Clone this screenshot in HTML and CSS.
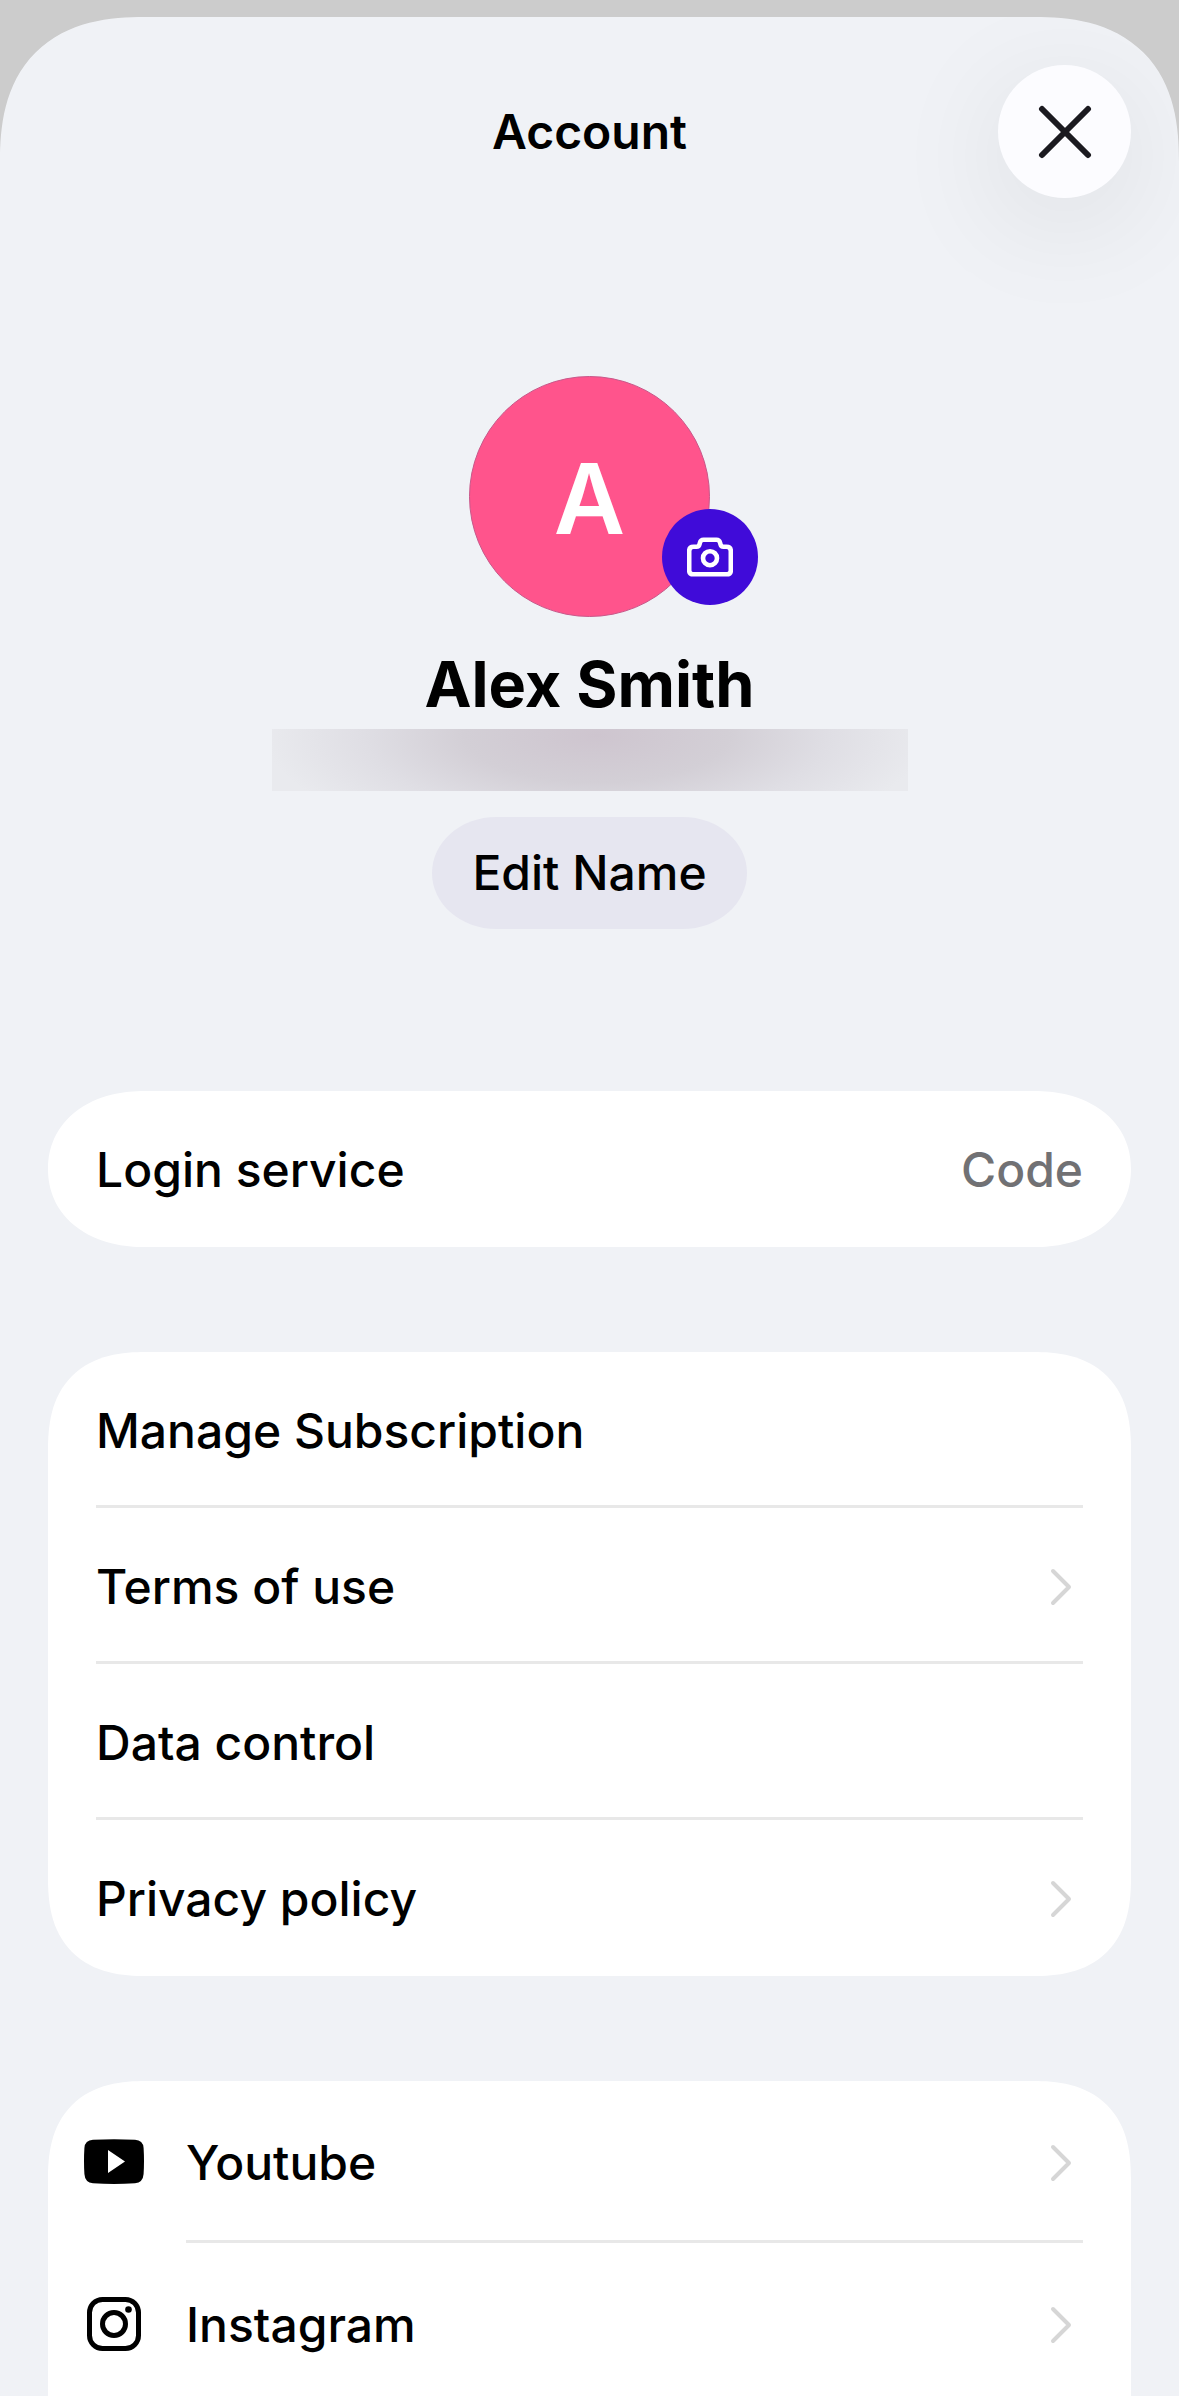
FILE: index.html
```html
<!DOCTYPE html>
<html lang="en">
<head>
    <meta charset="UTF-8">
    <meta name="viewport" content="width=device-width, initial-scale=1.0">
    <title>Account</title>
    <link rel="stylesheet" href="styles.css">
</head>
<body>

<main class="sheet">
    <header class="header">
        <h1 class="title">Account</h1>
        <button class="close-btn" type="button" aria-label="Close">
            <svg width="54" height="54" viewBox="0 0 54 54" fill="none" stroke="#1b1a20" stroke-width="6" stroke-linecap="round">
                <path d="M4 4L50 50M50 4L4 50"/>
            </svg>
        </button>
    </header>

    <section class="profile">
        <div class="avatar">
            <span>A</span>
            <button class="photo-btn" type="button" aria-label="Change photo">
                <svg width="46" height="40" viewBox="0 0 46 39" fill="none" stroke="#fff" stroke-width="4.6">
                    <path d="M6.5 9.2H9.5Q12 9.2 12.6 6.5L13 5Q13.7 2.2 16.5 2.2H29.5Q32.3 2.2 33 5L33.4 6.5Q34 9.2 36.5 9.2H39.5Q43.8 9.2 43.8 13.5V33Q43.8 36.8 39.5 36.8H6.5Q2.2 36.8 2.2 33V13.5Q2.2 9.2 6.5 9.2Z"/>
                    <circle cx="23" cy="20.7" r="7"/>
                </svg>
            </button>
        </div>
        <h2 class="name">Alex Smith</h2>
        <div class="hidden-email"></div>
        <button class="edit-btn" type="button">Edit Name</button>
    </section>

    <section class="card card-single">
        <div class="row">
            <span>Login service</span>
            <span class="value">Code</span>
        </div>
    </section>

    <nav class="card">
        <a class="row" href="#">Manage Subscription</a>
        <a class="row" href="#">Terms of use
            <svg class="chevron" width="22" height="38" viewBox="0 0 22 38"><path d="M3 3L19 19L3 35"/></svg>
        </a>
        <a class="row" href="#">Data control</a>
        <a class="row" href="#">Privacy policy
            <svg class="chevron" width="22" height="38" viewBox="0 0 22 38"><path d="M3 3L19 19L3 35"/></svg>
        </a>
    </nav>

    <nav class="card card-social">
        <a class="social" href="#">
            <svg class="social-icon" width="60" height="60" viewBox="0 0 60 60">
                <path fill="#000" fill-rule="evenodd" d="M9 7.8Q30 6.8 51 7.8Q59 8.2 59.6 16Q60.4 29 59.6 42Q59 50.6 51 51.2Q30 52.6 9 51.2Q1 50.6 .4 42Q-.4 29 .4 16Q1 8.2 9 7.8ZM24 18V41L41 29.5Z"/>
            </svg>
            <span class="row">Youtube
                <svg class="chevron" width="22" height="38" viewBox="0 0 22 38"><path d="M3 3L19 19L3 35"/></svg>
            </span>
        </a>
        <a class="social" href="#">
            <svg class="social-icon" width="60" height="60" viewBox="0 0 60 60" fill="none" stroke="#000" stroke-width="5">
                <rect x="5.5" y="5.5" width="49" height="49" rx="13"/>
                <circle cx="30" cy="30" r="11.5"/>
                <circle cx="44.5" cy="15.5" r="3.3" fill="#000" stroke="none"/>
            </svg>
            <span class="row">Instagram
                <svg class="chevron" width="22" height="38" viewBox="0 0 22 38"><path d="M3 3L19 19L3 35"/></svg>
            </span>
        </a>
    </nav>
</main>

</body>
</html>
```
FILE: styles.css
```css
* {
    box-sizing: border-box;
}
body {
    font-family: Inter, "Liberation Sans", sans-serif;
    font-size: 48px;
    font-weight: 500;
    line-height: 60px;
    color: #000;
    background-color: #ccc;
    margin: 0;
    padding-top: 17px;
    height: 100vh;
    overflow: hidden;
}
button {
    font: inherit;
    color: inherit;
    border: none;
    padding: 0;
    cursor: pointer;
}
svg {
    display: block;
}
.sheet {
    background-color: #f0f2f6;
    border-radius: 120px 120px 0 0;
    padding: 48px 48px 0;
    height: 100%;
    overflow-y: auto;
    scrollbar-width: none;
}

/* header */
.header {
    display: grid;
    grid-template-columns: 1fr auto 1fr;
    align-items: center;
}
.title {
    grid-column: 2;
    font-size: 48px;
    font-weight: 600;
    margin: 0;
}
.close-btn {
    justify-self: end;
    display: flex;
    align-items: center;
    justify-content: center;
    width: 133px;
    height: 133px;
    border-radius: 50%;
    background-color: #fcfcff;
    box-shadow: 0 24px 120px rgba(0, 0, 0, 0.09);
}

/* profile */
.profile {
    display: flex;
    flex-direction: column;
    align-items: center;
    margin: 178px 0 162px;
}
.avatar {
    position: relative;
    display: flex;
    align-items: center;
    justify-content: center;
    width: 241px;
    height: 241px;
    padding-top: 4px;
    border-radius: 50%;
    border: 1px solid #c8588a;
    background-color: #ff548c;
    color: #fff;
    font-size: 98px;
    font-weight: 600;
    line-height: 120px;
}
.photo-btn {
    position: absolute;
    right: -49px;
    bottom: 11px;
    display: flex;
    align-items: center;
    justify-content: center;
    width: 96px;
    height: 96px;
    border-radius: 50%;
    background-color: #400bd9;
}
.name {
    font-size: 63px;
    font-weight: 700;
    line-height: 74px;
    margin: 30px 0 8px;
}
.hidden-email {
    width: 636px;
    max-width: 100%;
    height: 62px;
    background: radial-gradient(ellipse 52% 190% at 51% 10%, #cec5cf 0%, #d3cfd6 40%, #dfdee4 70%, #e9eaee 100%);
}
.edit-btn {
    margin-top: 26px;
    padding: 26px 40px;
    border-radius: 64px / 56px;
    background-color: #e6e6f0;
}

/* lists */
.card {
    background-color: #fff;
    border-radius: 84px;
    margin-bottom: 105px;
    padding: 0 48px;
}
.card-single {
    border-radius: 90px / 78px;
}
.card-social {
    border-radius: 84px 84px 0 0;
    margin-bottom: 0;
    padding-left: 36px;
}
.row {
    display: flex;
    align-items: center;
    justify-content: space-between;
    min-height: 156px;
    padding-top: 5px;
    border-bottom: 3px solid #e8e8e8;
    color: inherit;
    text-decoration: none;
}
.card > .row:last-child {
    border-bottom-color: transparent;
}
.value {
    color: #717174;
}
.chevron {
    margin-right: 11px;
    fill: none;
    stroke: #d6d6d6;
    stroke-width: 4;
    stroke-linecap: round;
    stroke-linejoin: round;
}
.social {
    display: flex;
    align-items: center;
    gap: 42px;
    color: inherit;
    text-decoration: none;
}
.social .row {
    flex: 1;
    min-height: 162px;
}

/* smoother corners where the browser can draw them */
@supports (corner-shape: superellipse(1.3)) {
    .sheet,
    .card {
        corner-shape: superellipse(1.3);
    }
    .sheet {
        border-radius: 145px 145px 0 0;
    }
    .card {
        border-radius: 98px;
    }
    .card-single {
        corner-shape: superellipse(1.1);
        border-radius: 96px / 78px;
    }
    .card-social {
        border-radius: 98px 98px 0 0;
    }
}
```
